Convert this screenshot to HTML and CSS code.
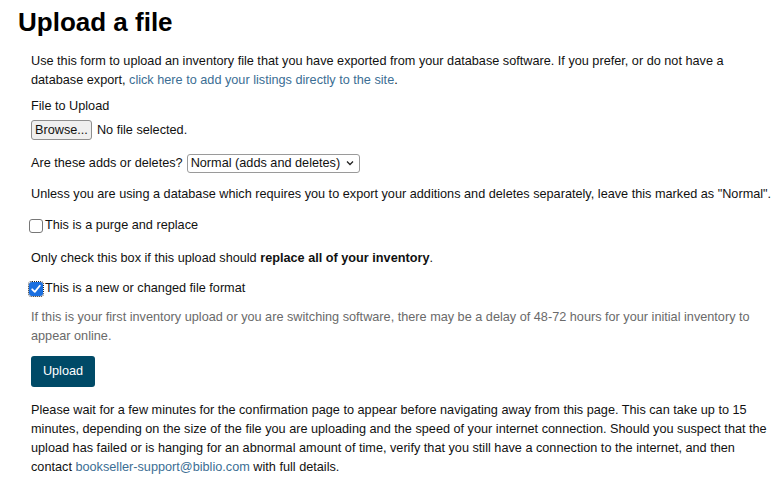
FILE: index.html
```html
<!DOCTYPE html>
<html>
<head>
<meta charset="utf-8">
<link rel="stylesheet" href="styles.css">
</head>
<body>
<h1 class="title">Upload a file</h1>
<div class="content">
  <p class="intro">Use this form to upload an inventory file that you have exported from your database software. If you prefer, or do not have a database export, <a class="link" href="#">click here to add your listings directly to the site</a>.</p>
  <div class="label">File to Upload</div>
  <div class="file-row"><span class="btn-browse">Browse...</span><span class="file-name">No file selected.</span></div>
  <div class="select-row">Are these adds or deletes? <span class="select">Normal (adds and deletes)<svg class="chev" width="8" height="6" viewBox="0 0 8 6"><path d="M1 1.5 L4 4.5 L7 1.5" fill="none" stroke="#222" stroke-width="1.3"/></svg></span></div>
  <p class="note note-a">Unless you are using a database which requires you to export your additions and deletes separately, leave this marked as "Normal".</p>
  <div class="check-row"><span class="box"></span>This is a purge and replace</div>
  <p class="note note-b">Only check this box if this upload should <b>replace all of your inventory</b>.</p>
  <div class="check-row last"><span class="box checked"><svg width="14" height="14" viewBox="0 0 14 14"><path d="M3.2 7.3 L5.8 9.9 L10.8 3.8" fill="none" stroke="#fff" stroke-width="1.8" stroke-linecap="round" stroke-linejoin="round"/></svg></span>This is a new or changed file format</div>
  <p class="muted">If this is your first inventory upload or you are switching software, there may be a delay of 48-72 hours for your initial inventory to appear online.</p>
  <div class="btn-upload">Upload</div>
  <p class="final">Please wait for a few minutes for the confirmation page to appear before navigating away from this page. This can take up to 15 minutes, depending on the size of the file you are uploading and the speed of your internet connection. Should you suspect that the upload has failed or is hanging for an abnormal amount of time, verify that you still have a connection to the internet, and then contact <a class="link" href="#">bookseller-support@biblio.com</a> with full details.</p>
</div>
</body>
</html>
```
FILE: styles.css
```css
body {
  margin: 0;
  background: #fff;
  color: #111;
  font-family: "Liberation Sans", Arial, sans-serif;
  font-size: 12.7px;
  line-height: 19px;
}
.title {
  margin: 0;
  padding: 6px 0 0 18px;
  font-size: 26px;
  line-height: 32px;
  font-weight: bold;
  color: #000;
}
.content {
  padding: 14px 1px 0 31px;
}
p { margin: 0; }
.link { color: #3b6e94; text-decoration: none; }
.intro { margin-bottom: 7px; }
.label { margin-bottom: 4px; }
.file-row {
  display: flex;
  align-items: center;
  gap: 5px;
  height: 20px;
  margin-bottom: 13px;
}
.btn-browse {
  display: inline-block;
  box-sizing: border-box;
  height: 20px;
  line-height: 18px;
  padding: 0 3px;
  border: 1px solid #8e8e8e;
  border-radius: 3px;
  background: #efefef;
}
.select-row {
  display: flex;
  align-items: center;
  gap: 4px;
  height: 20px;
  margin-bottom: 12px;
}
.select {
  display: inline-flex;
  align-items: center;
  box-sizing: border-box;
  height: 19px;
  padding: 0 5px 0 3px;
  border: 1px solid #9a9a9a;
  border-radius: 3px;
  background: #fff;
  gap: 6px;
}
.note-a { margin-bottom: 12px; }
.note-b { margin-bottom: 11px; }
.check-row {
  display: flex;
  align-items: center;
  height: 19px;
  margin-bottom: 14px;
}
.check-row.last { margin-bottom: 10px; }
.box {
  box-sizing: border-box;
  width: 14px;
  height: 14px;
  margin-left: -2px;
  margin-right: 2px;
  border: 1px solid #777;
  border-radius: 3px;
  background: #fff;
  display: inline-block;
}
.box.checked {
  background: #1a6fe0;
  border: none;
  outline: 1px dotted #222;
  outline-offset: 0;
}
.box svg { display: block; }
.muted { color: #6a6a6a; margin-bottom: 10px; }
.btn-upload {
  display: inline-block;
  box-sizing: border-box;
  width: 64px;
  height: 31px;
  line-height: 31px;
  text-align: center;
  color: #fff;
  background: #004a67;
  border-radius: 3px;
  margin-bottom: 14px;
}
```
